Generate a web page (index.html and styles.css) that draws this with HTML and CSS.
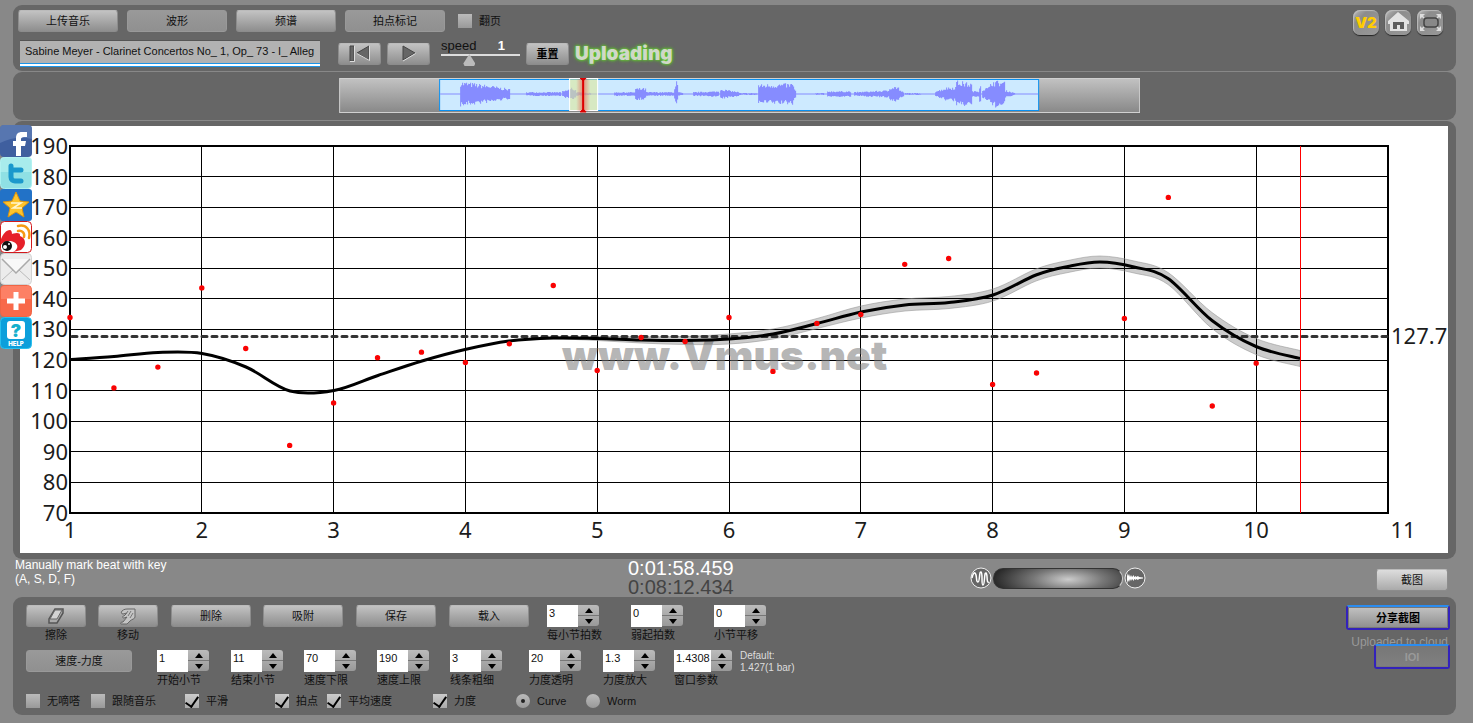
FILE: index.html
```html
<!DOCTYPE html>
<html lang="zh-CN">
<head>
    <meta charset="UTF-8">
    <meta name="viewport" content="width=device-width, initial-scale=1.0">
    <title>Vmus.net</title>
    <link rel="stylesheet" href="styles.css">
</head>
<body>
    <header class="panel toolbar">
        <div class="toolbar-main">
            <div class="tabs">
                <button class="btn tab">上传音乐</button>
                <button class="btn tab flat">波形</button>
                <button class="btn tab">频谱</button>
                <button class="btn tab flat">拍点标记</button>
                <label class="check"><input type="checkbox" id="pageTurn">翻页</label>
            </div>
            <div class="transport">
                <input type="text" class="track-name" aria-label="Track name" value="Sabine Meyer - Clarinet Concertos No_ 1, Op_ 73 - I_ Alleg">
                <button class="btn small" aria-label="Rewind">
                    <svg width="24" height="17" viewBox="0 0 24 17"><path d="M2 1h4v15H2z" fill="#666" stroke="#444"/><path d="M21 1v14L9 8z" fill="#666" stroke="#444"/><path d="M6.500 1v15.500H2M9 8.500l12.500 7V1" fill="none" stroke="#ddd"/></svg>
                </button>
                <button class="btn small" aria-label="Play">
                    <svg width="18" height="17" viewBox="0 0 18 17"><path d="M3 1v14l12-7z" fill="#666" stroke="#444"/><path d="M3 16l12.500-7.500" stroke="#ddd"/></svg>
                </button>
                <div class="speed">
                    <div class="speed-text"><label for="speed">speed</label><output for="speed" id="speedValue">1</output></div>
                    <input type="range" id="speed" min="0.5" max="2" step="0.1" value="1">
                </div>
                <button class="btn small strong" id="resetSpeed">重置</button>
                <span class="uploading">Uploading</span>
            </div>
        </div>
        <nav class="corner">
            <a href="#v2" class="corner-btn v2">V2</a>
            <a href="#home" class="corner-btn" aria-label="Home">
                <svg width="26" height="25" viewBox="0 0 26 25"><path d="M13 2L3 11v3h2v7h17v-7h2v-3L13 2z" fill="#e2e2e2"/><path d="M8 19v-7h11v7h-4v-4h-3v4z" fill="#5c5c5c"/></svg>
            </a>
            <a href="#full" class="corner-btn" aria-label="Full screen">
                <svg width="26" height="25" viewBox="0 0 26 25"><rect x="7" y="8" width="14" height="9" rx="3" fill="#888" stroke="#444" stroke-width="1.500"/><path d="M3 9V4h5zM24 9V4h-5zM3 16v5h5zM24 16v5h-5z" fill="#ddd"/><path d="M4 5l3 3M23 5l-3 3M4 20l3-3M23 20l-3-3" stroke="#ddd" stroke-width="1.500"/></svg>
            </a>
        </nav>
    </header>

    <section class="panel overview">
        <svg id="overview" viewBox="0 0 801 35" aria-label="Waveform overview">
            <defs>
                <linearGradient id="barFill" x2="0" y2="1"><stop stop-color="#c2c2c2"/><stop offset="1" stop-color="#888"/></linearGradient>
                <linearGradient id="glow"><stop stop-color="#e33" stop-opacity="0"/><stop offset=".5" stop-color="#e33" stop-opacity=".5"/><stop offset="1" stop-color="#e33" stop-opacity="0"/></linearGradient>
            </defs>
            <rect x=".5" y=".5" width="800" height="34" fill="url(#barFill)" stroke="#d0d0d0"/>
            <rect x="100.500" y="1.500" width="599" height="31" fill="#cdeaff" stroke="#0a90f0"/>
            <path id="wave" fill="#868cff"/>
            <rect x="230.500" y=".5" width="28" height="32" fill="#dde89a" fill-opacity=".6" stroke="#fff"/>
            <rect x="237" y="1" width="14" height="32" fill="url(#glow)"/>
            <path d="M244 1v32" stroke="#d00" stroke-width="2"/>
            <path d="M241 0h6l-3 3zM241 34h6l-3-3z" fill="#d00" stroke="#d00"/>
        </svg>
    </section>

    <main class="panel chart">
        <svg id="chart" viewBox="0 0 1428 427" aria-label="Tempo curve">
            <g id="grid"></g>
            <text class="watermark" x="542" y="244">www.Vmus.net</text>
            <path id="band"/>
            <path id="average"/>
            <path id="curve"/>
            <g id="beats"></g>
            <path id="playhead"/>
        </svg>
    </main>

    <nav class="share">
        <a href="#facebook" aria-label="Facebook"><svg viewBox="0 0 32 32"><rect width="32" height="32" rx="4" fill="#3f5f9f"/><path d="M0 4a4 4 0 0 1 4-4h24a4 4 0 0 1 4 4v10Q16 10 0 18z" fill="#6b88bd" opacity=".55"/><path d="M16 31V21h-3v-5h3v-3c0-4 2-6 6-6h5v5h-3c-2 0-3 1-3 2v2h5l-1 5h-4v10z" fill="#fff"/></svg></a>
        <a href="#twitter" aria-label="Twitter"><svg viewBox="0 0 32 32"><rect x=".5" y=".5" width="31" height="31" rx="4" fill="#8fe0e4" stroke="#a9f0f0"/><path d="M0 4a4 4 0 0 1 4-4h24a4 4 0 0 1 4 4v11H0z" fill="#b9f3f2" opacity=".6"/><path d="M11 9v11c0 3 2 4 4 4h6M11 13h10" fill="none" stroke="#1b98cc" stroke-width="5" stroke-linecap="round" stroke-linejoin="round"/></svg></a>
        <a href="#qzone" aria-label="Qzone"><svg viewBox="0 0 32 32"><rect width="32" height="32" rx="3" fill="#2272c7"/><path d="M16 3l4 9 9 1-7 6 2 9-8-5-8 5 2-9-7-6 9-1z" fill="#fdc42c" stroke="#d99310"/><path d="M11 14h10l-8 5h9" fill="none" stroke="#fff6d0" stroke-width="1.500"/></svg></a>
        <a href="#weibo" aria-label="Weibo"><svg viewBox="0 0 32 32"><rect x=".5" y=".5" width="31" height="31" rx="4" fill="#fff" stroke="#d2191c"/><path d="M1 18c2-5 5-9 9-9 2 0 2 4 2 4s9-3 8 2c6 2 7 9 1 14l-8 2c8-4 4-11-4-11-4 0-7 2-8 4z" fill="#e6212a"/><circle cx="7" cy="25" r="5" fill="#111"/><circle cx="5" cy="26" r="2" fill="#fff"/><circle cx="9" cy="23" r="1" fill="#fff"/><path d="M18 10c4-1 7 2 6 6M18 5c8-2 13 4 11 12" fill="none" stroke="#f59a15" stroke-width="2.500" stroke-linecap="round"/></svg></a>
        <a href="#mail" aria-label="Mail"><svg viewBox="0 0 32 32"><rect x=".5" y=".5" width="31" height="31" rx="4" fill="#ececec" stroke="#d2d2d2"/><path d="M2 27l11-10M30 27L19 17" stroke="#bbb"/><path d="M2 6l14 14L30 6" fill="#f8f8f8" stroke="#aaa" stroke-width="1.500"/></svg></a>
        <a href="#more" aria-label="More"><svg viewBox="0 0 32 32"><rect x=".5" y=".5" width="31" height="31" rx="4" fill="#f8694a" stroke="#ef6545"/><path d="M1 4a3 3 0 0 1 3-3h24a3 3 0 0 1 3 3v10H1z" fill="#ff8a70" opacity=".7"/><path d="M16 7v18M7 16h18" stroke="#fff" stroke-width="5"/></svg></a>
        <a href="#help" aria-label="Help"><svg viewBox="0 0 32 32"><rect x=".5" y=".5" width="31" height="31" rx="4" fill="#0c9fdb" stroke="#28c0ee"/><rect x="7" y="4" width="18" height="18" rx="3" fill="#fff"/><text class="help-mark" x="16" y="20">?</text><text class="help-text" x="16" y="29">HELP</text></svg></a>
    </nav>

    <section class="status">
        <p class="hint">Manually mark beat with key<br>(A, S, D, F)</p>
        <div class="clock"><span>0:01:58.459</span><span class="total">0:08:12.434</span></div>
        <div class="mixer">
            <svg width="22" height="22" viewBox="0 0 22 22"><circle cx="11" cy="11" r="10" fill="#666" stroke="#eee"/><path d="M2 11c1-5 3-7 4-3s0 7 2 7 1-11 3-10 0 13 2 13 1-13 3-12 0 11 3 9" fill="none" stroke="#fff" stroke-width="1.500"/></svg>
            <input type="range" id="mix" aria-label="Volume">
            <svg width="22" height="22" viewBox="0 0 22 22"><circle cx="11" cy="11" r="10" fill="#666" stroke="#eee"/><path d="M3 6l1 3 1-2 1 3 1-2 1 2 2-2v2l2-1v1l2-1 1 1 4 .500v1l-4 .500-1 1-2-1v1l-2-1v2l-2-2-1 2-1-2-1 3-1-2-1 4z" fill="#fff"/></svg>
        </div>
        <button class="btn shot">截图</button>
    </section>

    <footer class="panel controls">
        <div class="settings">
            <div class="row edit-row">
                <div class="tool"><button class="btn" id="erase" aria-labelledby="eraseText"><svg width="18" height="17" viewBox="0 0 18 17"><path d="M8 1h8v4l-6 10H2v-4z" fill="#aaa" stroke="#555" stroke-width="1.500"/><path d="M8 2h7l-5 9H3z" fill="#d2d2d2" stroke="#666"/></svg></button><span id="eraseText">擦除</span></div>
                <div class="tool"><button class="btn" id="move" aria-labelledby="moveText"><svg width="18" height="17" viewBox="0 0 18 17"><path d="M3 3c2-2 4-2 7-2h6v8c0 2-3 2-5 4l-3 3H2c-1-1 0-2 2-2l4-5-3 1c-2 0-2-2 0-2l3-3-4 1c-2 0-2-2-1-3z" fill="#c4c4c4" stroke="#666"/><path d="M9 3l-2 3M12 3L9 8M14 5l-3 5" stroke="#777"/></svg></button><span id="moveText">移动</span></div>
                <button class="btn">删除</button>
                <button class="btn">吸附</button>
                <button class="btn">保存</button>
                <button class="btn">载入</button>
                <div class="spin"><input type="text" id="beatsPerBar" value="3"><span class="step"><button aria-label="up"></button><button aria-label="down"></button></span><label for="beatsPerBar">每小节拍数</label></div>
                <div class="spin"><input type="text" id="pickup" value="0"><span class="step"><button aria-label="up"></button><button aria-label="down"></button></span><label for="pickup">弱起拍数</label></div>
                <div class="spin"><input type="text" id="barShift" value="0"><span class="step"><button aria-label="up"></button><button aria-label="down"></button></span><label for="barShift">小节平移</label></div>
            </div>
            <div class="row range-row">
                <button class="btn flat">速度-力度</button>
                <div class="spin"><input type="text" id="startBar" value="1"><span class="step"><button aria-label="up"></button><button aria-label="down"></button></span><label for="startBar">开始小节</label></div>
                <div class="spin"><input type="text" id="endBar" value="11"><span class="step"><button aria-label="up"></button><button aria-label="down"></button></span><label for="endBar">结束小节</label></div>
                <div class="spin"><input type="text" id="minTempo" value="70"><span class="step"><button aria-label="up"></button><button aria-label="down"></button></span><label for="minTempo">速度下限</label></div>
                <div class="spin"><input type="text" id="maxTempo" value="190"><span class="step"><button aria-label="up"></button><button aria-label="down"></button></span><label for="maxTempo">速度上限</label></div>
                <div class="spin"><input type="text" id="lineWidth" value="3"><span class="step"><button aria-label="up"></button><button aria-label="down"></button></span><label for="lineWidth">线条粗细</label></div>
                <div class="spin"><input type="text" id="opacity" value="20"><span class="step"><button aria-label="up"></button><button aria-label="down"></button></span><label for="opacity">力度透明</label></div>
                <div class="spin"><input type="text" id="scale" value="1.3"><span class="step"><button aria-label="up"></button><button aria-label="down"></button></span><label for="scale">力度放大</label></div>
                <div class="spin wide"><input type="text" id="window" value="1.4308"><span class="step"><button aria-label="up"></button><button aria-label="down"></button></span><label for="window">窗口参数</label></div>
                <p class="default">Default:<br>1.427(1 bar)</p>
            </div>
            <div class="row option-row">
                <label class="check"><input type="checkbox">无嘀嗒</label>
                <label class="check"><input type="checkbox">跟随音乐</label>
                <label class="check"><input type="checkbox" checked>平滑</label>
                <label class="check"><input type="checkbox" checked>拍点</label>
                <label class="check"><input type="checkbox" checked>平均速度</label>
                <label class="check"><input type="checkbox" checked>力度</label>
                <label class="check"><input type="radio" name="view" checked>Curve</label>
                <label class="check"><input type="radio" name="view">Worm</label>
            </div>
        </div>
        <div class="cloud">
            <button class="btn outlined strong">分享截图</button>
            <span class="cloud-text">Uploaded to cloud</span>
            <button class="btn outlined done" disabled>IOI</button>
        </div>
    </footer>

    <script src="script.js"></script>
</body>
</html>
```
FILE: styles.css
```css
:root {
    --page: #888;
    --panel: #666;
    --ui-font: "Liberation Sans", Arial, "Noto Sans CJK SC", sans-serif;
}
* {
    box-sizing: border-box;
}
body {
    margin: 0;
    padding: 5px 17px 7px 13px;
    background: var(--page);
    font-family: var(--ui-font);
    font-size: 11px;
    color: #111;
}
p {
    margin: 0;
}
button, input {
    font: inherit;
    color: inherit;
    margin: 0;
}
svg {
    display: block;
}
.panel {
    background: var(--panel);
    border-radius: 9px;
    margin-bottom: 1px;
}
.btn {
    display: flex;
    align-items: center;
    justify-content: center;
    height: 22px;
    padding: 0;
    border: 1px solid #8c8c8c;
    border-top-color: #bbb;
    border-radius: 3px;
    background: linear-gradient(#c2c2c2, #8e8e8e);
    line-height: 16px;
    cursor: pointer;
}
.btn.flat {
    background: linear-gradient(#999, #909090);
    border-color: #999;
}
.btn.small {
    width: 43px;
}
.btn.strong {
    font-weight: bold;
    color: #000;
}

/* top toolbar */
.toolbar {
    display: flex;
    justify-content: space-between;
    padding: 5px 13px 4px 5px;
}
.tabs {
    display: flex;
    align-items: center;
    gap: 9px;
    margin-bottom: 8px;
}
.tab {
    width: 100px;
}
.tabs .check {
    margin-left: 4px;
}
.transport {
    display: flex;
    align-items: center;
    gap: 6px;
    height: 27px;
}
.track-name {
    width: 300px;
    height: 27px;
    margin: 0 12px 0 2px;
    padding: 0 5px 6px;
    border: 0;
    border-top: 1px solid #555;
    border-bottom: 1px solid #1d95e8;
    background: linear-gradient(#b2b2b2 22px, #1d95e8 22px, #1d95e8 23px, #fff 23px);
}
.speed {
    width: 79px;
    margin: 0 0 0 5px;
}
.speed-text {
    display: flex;
    justify-content: space-between;
    padding-right: 15px;
    margin-bottom: 3px;
    font-size: 13px;
    line-height: 10px;
}
.speed-text output {
    color: #fff;
    font-weight: bold;
}
#speed {
    display: block;
    width: 100%;
    height: 12px;
    appearance: none;
    background: linear-gradient(#ddd, #ddd) 0 0 / 100% 2px no-repeat;
}
#speed::-webkit-slider-thumb {
    appearance: none;
    width: 12px;
    height: 12px;
    background: #bbb;
    clip-path: polygon(50% 0, 100% 80%, 90% 100%, 10% 100%, 0 80%);
}
.uploading {
    font: 900 19px Inter, sans-serif;
    color: #d0d8c8;
    text-shadow: 0 0 2px #6c3, 0 0 3px #6c3, 0 0 4px #5b2;
}
.corner {
    display: flex;
    gap: 6px;
}
.corner-btn {
    width: 26px;
    height: 25px;
    border-radius: 7px;
    background: linear-gradient(135deg, #bbb, #8c8c8c 30%, #999);
    box-shadow: inset 1px 1px 1px #bbb, 0 1px 1px #222;
    text-decoration: none;
}
.v2 {
    font: 900 15px/25px Inter, sans-serif;
    text-align: center;
    color: #fc0;
}

/* waveform strip */
.overview {
    padding: 6px 0 7px 22.6%;
}
#overview {
    width: 71.74%;
}

/* tempo chart */
.chart {
    margin: 0;
    padding: 5px 8px 6px 7px;
}
#chart {
    width: 100%;
    background: #fff;
}
#chart text {
    font-family: "Noto Sans", "Open Sans", sans-serif;
    font-size: 22px;
    fill: #1c1c1c;
}
#chart .watermark {
    font-family: Inter, sans-serif;
    font-size: 41px;
    font-weight: 900;
    fill: #777;
    fill-opacity: 0.55;
}
.grid-line {
    stroke: #000;
    shape-rendering: crispEdges;
}
#chart .frame {
    fill: none;
    stroke: #000;
    stroke-width: 2;
}
#band {
    fill: #000;
    fill-opacity: 0.2;
    stroke: #999;
    stroke-opacity: 0.6;
}
#average {
    stroke: #333;
    stroke-width: 3;
    stroke-dasharray: 5 5;
    stroke-linecap: round;
}
#curve {
    fill: none;
    stroke: #000;
    stroke-width: 3;
}
#beats circle {
    fill: #a22;
    stroke: #f00;
    stroke-width: 2;
}
#playhead {
    stroke: #f00;
    shape-rendering: crispEdges;
}

/* share buttons lie over the left edge of the chart */
.share {
    position: absolute;
    top: 125px;
    left: 0;
    width: 32px;
}
.share a {
    display: block;
    height: 32px;
}
.share text {
    font-family: Inter, sans-serif;
    font-weight: 900;
    text-anchor: middle;
}
.help-mark {
    font-size: 18px;
    fill: #16b0cc;
}
.help-text {
    font-size: 6px;
    fill: #fff;
}

.status {
    display: flex;
    height: 38px;
    padding: 0 8px 0 2px;
}
.hint {
    width: 613px;
    margin-top: -1px;
    color: #fff;
    font-size: 12px;
    line-height: 14px;
}
.clock {
    display: flex;
    flex-direction: column;
    width: 342px;
    font-size: 20px;
    line-height: 19px;
    color: #fff;
}
.clock .total {
    color: #444;
}
.mixer {
    display: flex;
    align-items: center;
    gap: 1px;
}
#mix {
    width: 130px;
    height: 21px;
    appearance: none;
    border-radius: 10px;
    border: 1px solid #333;
    border-right-color: #ccc;
    background: radial-gradient(ellipse 78px 24px at 58% 55%, #ccc, #777 45%, #222);
}
#mix::-webkit-slider-thumb {
    appearance: none;
    width: 1px;
    height: 1px;
}
.shot {
    width: 72px;
    margin: 10px 0 0 auto;
    background: linear-gradient(#ddd, #aaa);
}

/* bottom panel */
.controls {
    display: flex;
    justify-content: space-between;
    margin: 0;
    padding: 8px 6px 6px 13px;
}
.row {
    display: grid;
    justify-items: start;
    align-items: start;
}
.edit-row {
    grid-template-columns: 72px 73px 92px 93px 93px 98px 84px 83px auto;
    height: 45px;
}
.edit-row > .btn {
    width: 80px;
}
.range-row {
    grid-template-columns: 131px 74px 73px 73px 73px 79px 74px 71px 66px auto;
    height: 43px;
}
.range-row > .btn {
    width: 106px;
}
.option-row {
    grid-template-columns: 65px 94px 90px 52px 106px 83px 70px auto;
}
.tool {
    text-align: center;
    line-height: 16px;
}
.tool .btn {
    width: 60px;
}
.spin {
    display: grid;
    grid-template-columns: 31px 21px;
    line-height: 16px;
}
.spin.wide {
    grid-template-columns: 37px 21px;
}
.spin input {
    width: 100%;
    height: 22px;
    padding: 0 0 6px 2px;
    border: 0;
    background: #fff;
}
.spin label {
    grid-column: 1 / 3;
    white-space: nowrap;
}
.step {
    display: grid;
    height: 21px;
    border-radius: 0 3px 3px 0;
    background: linear-gradient(#bbb, #999);
}
.step button {
    display: grid;
    place-items: center;
    padding: 0;
    border: 0;
    background: none;
}
.step button + button {
    border-top: 1px solid #777;
}
.step button::after {
    content: "";
    border: 4px solid transparent;
    border-top-width: 0;
    border-bottom: 5px solid #000;
}
.step button + button::after {
    border-bottom: 0;
    border-top: 5px solid #000;
}
.default {
    color: #ddd;
    font-size: 10px;
    line-height: 12px;
}
.check {
    display: flex;
    align-items: center;
    gap: 7px;
    line-height: 16px;
    white-space: nowrap;
}
.check input {
    display: grid;
    place-items: center;
    width: 14px;
    height: 14px;
    appearance: none;
    background: linear-gradient(#bbb, #999);
}
.check input[type="checkbox"]:checked {
    background: linear-gradient(#ccc, #aaa);
}
.check input[type="checkbox"]:checked::after {
    content: "";
    width: 6px;
    height: 11px;
    margin-bottom: 4px;
    border: solid #000;
    border-width: 0 2px 2px 0;
    transform: rotate(35deg);
}
.check input[type="radio"] {
    border-radius: 50%;
}
.check input[type="radio"]:checked::after {
    content: "";
    width: 4px;
    height: 4px;
    border-radius: 50%;
    background: #222;
}
.cloud {
    display: flex;
    flex-direction: column;
    align-items: flex-end;
}
.btn.outlined {
    width: 104px;
    height: 25px;
    border: 2px solid #32b;
    border-top-color: #2a8cf0;
    box-shadow: inset 0 0 0 1px #777;
}
.cloud-text {
    margin: 5px 2px 0 0;
    font-size: 12px;
    line-height: 14px;
    color: #999;
}
.btn.done {
    width: 76px;
    margin-top: -5px;
    background: linear-gradient(#777, #808080);
    color: #999;
    font-weight: bold;
}
```
FILE: script.js
```js
const SVG = 'http://www.w3.org/2000/svg';
const barX = bar => 50 + (bar - 1) * 131.8;
const tempoY = bpm => 20 + (190 - bpm) * 3.0583;

function add(parent, tag, attrs, text) {
    const el = document.createElementNS(SVG, tag);
    for (const key in attrs) el.setAttribute(key, attrs[key]);
    if (text !== undefined) el.textContent = text;
    parent.appendChild(el);
}

// grid and axis labels
const grid = document.getElementById('grid');
for (let bpm = 70; bpm <= 190; bpm += 10) {
    const y = tempoY(bpm);
    add(grid, 'path', { class: 'grid-line', d: `M50 ${Math.floor(y) + 0.5}H1368` });
    add(grid, 'text', { x: 48, y: y + 8, 'text-anchor': 'end' }, bpm);
}
for (let bar = 1; bar <= 11; bar++) {
    const x = barX(bar);
    add(grid, 'path', { class: 'grid-line', d: `M${Math.floor(x) + 0.5} 20V387` });
    add(grid, 'text', { x: bar === 11 ? x + 15 : x, y: 412, 'text-anchor': 'middle' }, bar);
}
add(grid, 'rect', { class: 'frame', x: 50, y: 20, width: 1318, height: 367 });
add(grid, 'text', { x: 1371, y: 218 }, '127.7');
document.getElementById('average').setAttribute('d', 'M52 210.5H1367');
document.getElementById('playhead').setAttribute('d', 'M1280.5 20V387');

// one tempo per beat, three beats in a bar
const tempos = [133.9, 110.9, 117.7, 143.6, 123.8, 92.1, 106, 120.8, 122.6, 119.2, 125.3, 144.4, 116.6, 127.4,
    126.1, 133.9, 116.3, 132, 134.9, 151.3, 153.2, 112, 115.8, null, 133.6, 173.2, 105, 119];
const beats = document.getElementById('beats');
tempos.forEach((bpm, i) => {
    if (bpm !== null) add(beats, 'circle', { cx: barX(1 + i / 3), cy: tempoY(bpm), r: 1.7 });
});

// smoothed curve: x, y, half height of the dynamics band
const points = [
    [50, 233.5, 0], [94, 230.5, 0], [138, 226.5, 0], [182, 227.5, 0], [226, 241, 0], [270, 265, 0],
    [314, 264.5, 0], [358, 249.5, 0], [402, 235, 0], [445, 223.5, 0], [489, 215, 0], [533, 212, 1],
    [577, 212.5, 2], [621, 214, 3], [665, 214.5, 4], [709, 213, 5], [753, 208, 5], [797, 197.5, 5], [841, 186, 6],
    [885, 179, 6], [929, 176.5, 6], [973, 169, 6], [1016, 149, 6], [1048, 140.5, 6],
    [1080, 136, 6], [1114, 141, 6], [1148, 152.5, 6], [1192, 194.5, 8],
    [1236, 220.5, 8], [1280, 232.5, 8]
];

function smooth(list) {
    let d = '';
    for (let i = 0; i < list.length - 1; i++) {
        const a = list[i - 1] || list[i], b = list[i], c = list[i + 1], e = list[i + 2] || c;
        d += `C${b[0] + (c[0] - a[0]) / 6} ${b[1] + (c[1] - a[1]) / 6} ${c[0] - (e[0] - b[0]) / 6} ${c[1] - (e[1] - b[1]) / 6} ${c[0]} ${c[1]}`;
    }
    return d;
}
document.getElementById('curve').setAttribute('d', `M${points[0][0]} ${points[0][1]}` + smooth(points));
const loud = points.slice(10);
const upper = loud.map(p => [p[0], p[1] - p[2]]);
const lower = loud.map(p => [p[0], p[1] + p[2]]).reverse();
document.getElementById('band').setAttribute('d',
    `M${upper[0]}` + smooth(upper) + `L${lower[0]}` + smooth(lower) + 'Z');

// overview waveform: from, to, height at both ends
const envelope = [
    [121, 150, 13, 9], [150, 171, 9, 5], [187, 222, 2, 2], [223, 232, 3, 6], [232, 237, 7, 4], [237, 252, 2, 1],
    [275, 296, 2, 2], [296, 307, 6, 6], [307, 335, 2, 2], [335, 337, 7, 11], [337, 339, 14, 5], [339, 344, 2, 1],
    [354, 380, 2, 3], [381, 384, 6, 5], [384, 400, 5, 2], [400, 418, 1, 1], [419, 455, 10, 11], [455, 457, 5, 3],
    [476, 485, 1, 1], [488, 512, 3, 3], [515, 550, 2, 4], [550, 560, 8, 8], [560, 565, 4, 2],
    [566, 582, 1, 1], [596, 610, 3, 8], [610, 617, 7, 8], [617, 633, 14, 11], [633, 640, 3, 3], [640, 642, 10, 10],
    [643, 651, 5, 8], [651, 666, 14, 13], [666, 676, 4, 1]
];
let seed = 7;
function random() {
    seed = (seed * 16807) % 2147483647;
    return seed / 2147483647;
}
let wave = 'M101 15.5h598v1h-598z';
for (const [from, to, start, end] of envelope) {
    for (let x = from; x < to; x++) {
        const height = start + (end - start) * (x - from) / (to - from);
        const up = height * (0.55 + 0.45 * random());
        const down = height * (0.55 + 0.45 * random());
        wave += `M${x} ${16 - up}h1V${16 + down}h-1z`;
    }
}
document.getElementById('wave').setAttribute('d', wave);

const speed = document.getElementById('speed');
const speedValue = document.getElementById('speedValue');
speed.addEventListener('input', () => {
    speedValue.textContent = speed.value;
});
document.getElementById('resetSpeed').addEventListener('click', () => {
    speed.value = 1;
    speedValue.textContent = 1;
});
```
